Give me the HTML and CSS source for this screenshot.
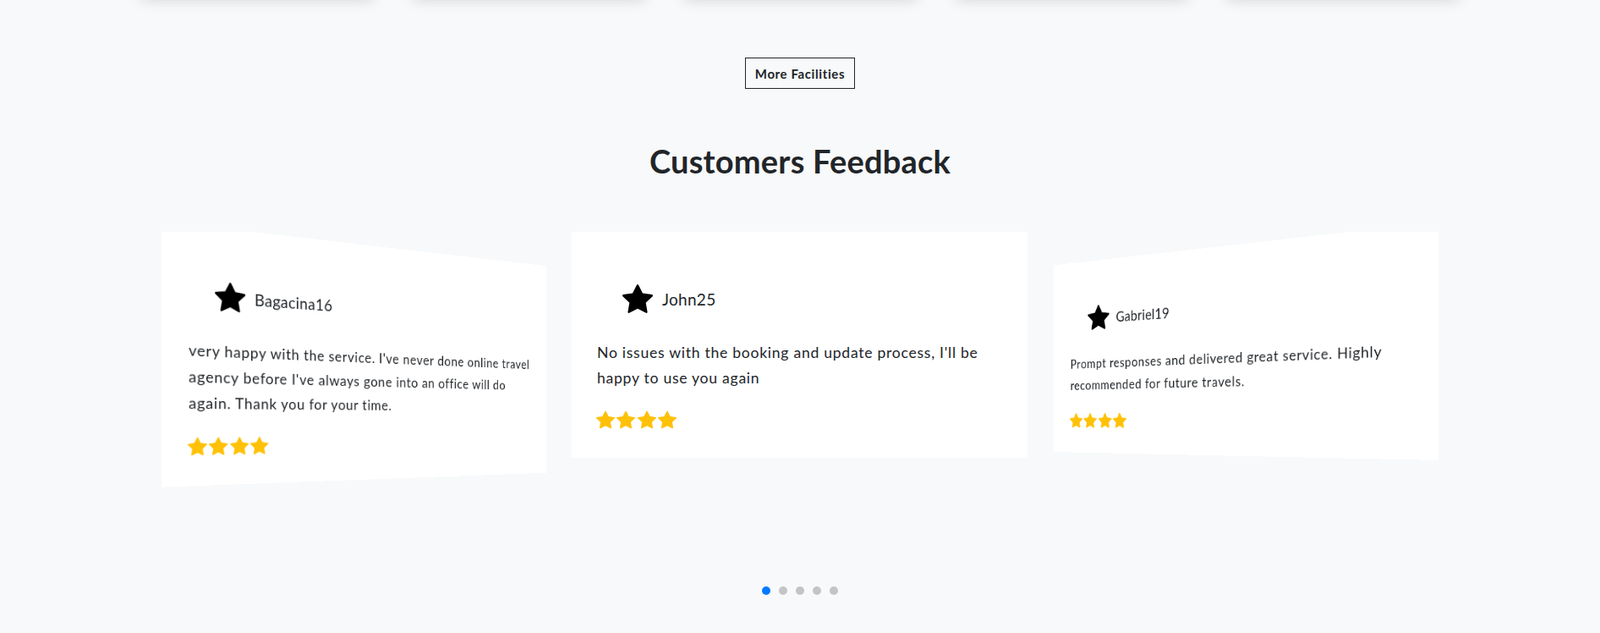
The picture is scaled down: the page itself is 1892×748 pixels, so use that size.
FILE: index.html
```html
<!DOCTYPE html>
<html lang="en">
<head>
<meta charset="utf-8">
<title>Customers Feedback</title>
<link rel="stylesheet" href="styles.css">
</head>
<body>
<div class="page">
  <section class="facilities">
    <div class="facility-card"></div>
    <div class="facility-card"></div>
    <div class="facility-card"></div>
    <div class="facility-card"></div>
    <div class="facility-card"></div>
  </section>

  <div class="more-wrap">
    <button class="more-btn" type="button">More Facilities</button>
  </div>

  <h2 class="feedback-title">Customers Feedback</h2>

  <div class="carousel">
    <div class="slide">
      <div class="review review-left">
        <div class="review-head">
          <svg class="avatar-star" viewBox="0 0 16 16" aria-hidden="true"><path d="M3.612 15.443c-.386.198-.824-.149-.746-.592l.83-4.73L.173 6.765c-.329-.314-.158-.888.283-.95l4.898-.696L7.538.792c.197-.39.73-.39.927 0l2.184 4.327 4.898.696c.441.062.612.636.282.95l-3.522 3.356.83 4.73c.078.443-.36.79-.746.592L8 13.187l-4.389 2.256z"/></svg>
          <span class="review-name">Bagacina16</span>
        </div>
        <p class="review-text">very happy with the service. I've never done online travel agency before I've always gone into an office will do again. Thank you for your time.</p>
        <div class="rating">
          <svg viewBox="0 0 16 16"><path d="M3.612 15.443c-.386.198-.824-.149-.746-.592l.83-4.73L.173 6.765c-.329-.314-.158-.888.283-.95l4.898-.696L7.538.792c.197-.39.73-.39.927 0l2.184 4.327 4.898.696c.441.062.612.636.282.95l-3.522 3.356.83 4.73c.078.443-.36.79-.746.592L8 13.187l-4.389 2.256z"/></svg>
          <svg viewBox="0 0 16 16"><path d="M3.612 15.443c-.386.198-.824-.149-.746-.592l.83-4.73L.173 6.765c-.329-.314-.158-.888.283-.95l4.898-.696L7.538.792c.197-.39.73-.39.927 0l2.184 4.327 4.898.696c.441.062.612.636.282.95l-3.522 3.356.83 4.73c.078.443-.36.79-.746.592L8 13.187l-4.389 2.256z"/></svg>
          <svg viewBox="0 0 16 16"><path d="M3.612 15.443c-.386.198-.824-.149-.746-.592l.83-4.73L.173 6.765c-.329-.314-.158-.888.283-.95l4.898-.696L7.538.792c.197-.39.73-.39.927 0l2.184 4.327 4.898.696c.441.062.612.636.282.95l-3.522 3.356.83 4.73c.078.443-.36.79-.746.592L8 13.187l-4.389 2.256z"/></svg>
          <svg viewBox="0 0 16 16"><path d="M3.612 15.443c-.386.198-.824-.149-.746-.592l.83-4.73L.173 6.765c-.329-.314-.158-.888.283-.95l4.898-.696L7.538.792c.197-.39.73-.39.927 0l2.184 4.327 4.898.696c.441.062.612.636.282.95l-3.522 3.356.83 4.73c.078.443-.36.79-.746.592L8 13.187l-4.389 2.256z"/></svg>
        </div>
      </div>
    </div>

    <div class="slide">
      <div class="review">
        <div class="review-head">
          <svg class="avatar-star" viewBox="0 0 16 16" aria-hidden="true"><path d="M3.612 15.443c-.386.198-.824-.149-.746-.592l.83-4.73L.173 6.765c-.329-.314-.158-.888.283-.95l4.898-.696L7.538.792c.197-.39.73-.39.927 0l2.184 4.327 4.898.696c.441.062.612.636.282.95l-3.522 3.356.83 4.73c.078.443-.36.79-.746.592L8 13.187l-4.389 2.256z"/></svg>
          <span class="review-name">John25</span>
        </div>
        <p class="review-text">No issues with the booking and update process, I'll be happy to use you again</p>
        <div class="rating">
          <svg viewBox="0 0 16 16"><path d="M3.612 15.443c-.386.198-.824-.149-.746-.592l.83-4.73L.173 6.765c-.329-.314-.158-.888.283-.95l4.898-.696L7.538.792c.197-.39.73-.39.927 0l2.184 4.327 4.898.696c.441.062.612.636.282.95l-3.522 3.356.83 4.73c.078.443-.36.79-.746.592L8 13.187l-4.389 2.256z"/></svg>
          <svg viewBox="0 0 16 16"><path d="M3.612 15.443c-.386.198-.824-.149-.746-.592l.83-4.73L.173 6.765c-.329-.314-.158-.888.283-.95l4.898-.696L7.538.792c.197-.39.73-.39.927 0l2.184 4.327 4.898.696c.441.062.612.636.282.95l-3.522 3.356.83 4.73c.078.443-.36.79-.746.592L8 13.187l-4.389 2.256z"/></svg>
          <svg viewBox="0 0 16 16"><path d="M3.612 15.443c-.386.198-.824-.149-.746-.592l.83-4.73L.173 6.765c-.329-.314-.158-.888.283-.95l4.898-.696L7.538.792c.197-.39.73-.39.927 0l2.184 4.327 4.898.696c.441.062.612.636.282.95l-3.522 3.356.83 4.73c.078.443-.36.79-.746.592L8 13.187l-4.389 2.256z"/></svg>
          <svg viewBox="0 0 16 16"><path d="M3.612 15.443c-.386.198-.824-.149-.746-.592l.83-4.73L.173 6.765c-.329-.314-.158-.888.283-.95l4.898-.696L7.538.792c.197-.39.73-.39.927 0l2.184 4.327 4.898.696c.441.062.612.636.282.95l-3.522 3.356.83 4.73c.078.443-.36.79-.746.592L8 13.187l-4.389 2.256z"/></svg>
        </div>
      </div>
    </div>

    <div class="slide">
      <div class="review review-right">
        <div class="review-head">
          <svg class="avatar-star" viewBox="0 0 16 16" aria-hidden="true"><path d="M3.612 15.443c-.386.198-.824-.149-.746-.592l.83-4.73L.173 6.765c-.329-.314-.158-.888.283-.95l4.898-.696L7.538.792c.197-.39.73-.39.927 0l2.184 4.327 4.898.696c.441.062.612.636.282.95l-3.522 3.356.83 4.73c.078.443-.36.79-.746.592L8 13.187l-4.389 2.256z"/></svg>
          <span class="review-name">Gabriel19</span>
        </div>
        <p class="review-text">Prompt responses and delivered great service. Highly recommended for future travels.</p>
        <div class="rating">
          <svg viewBox="0 0 16 16"><path d="M3.612 15.443c-.386.198-.824-.149-.746-.592l.83-4.73L.173 6.765c-.329-.314-.158-.888.283-.95l4.898-.696L7.538.792c.197-.39.73-.39.927 0l2.184 4.327 4.898.696c.441.062.612.636.282.95l-3.522 3.356.83 4.73c.078.443-.36.79-.746.592L8 13.187l-4.389 2.256z"/></svg>
          <svg viewBox="0 0 16 16"><path d="M3.612 15.443c-.386.198-.824-.149-.746-.592l.83-4.73L.173 6.765c-.329-.314-.158-.888.283-.95l4.898-.696L7.538.792c.197-.39.73-.39.927 0l2.184 4.327 4.898.696c.441.062.612.636.282.95l-3.522 3.356.83 4.73c.078.443-.36.79-.746.592L8 13.187l-4.389 2.256z"/></svg>
          <svg viewBox="0 0 16 16"><path d="M3.612 15.443c-.386.198-.824-.149-.746-.592l.83-4.73L.173 6.765c-.329-.314-.158-.888.283-.95l4.898-.696L7.538.792c.197-.39.73-.39.927 0l2.184 4.327 4.898.696c.441.062.612.636.282.95l-3.522 3.356.83 4.73c.078.443-.36.79-.746.592L8 13.187l-4.389 2.256z"/></svg>
          <svg viewBox="0 0 16 16"><path d="M3.612 15.443c-.386.198-.824-.149-.746-.592l.83-4.73L.173 6.765c-.329-.314-.158-.888.283-.95l4.898-.696L7.538.792c.197-.39.73-.39.927 0l2.184 4.327 4.898.696c.441.062.612.636.282.95l-3.522 3.356.83 4.73c.078.443-.36.79-.746.592L8 13.187l-4.389 2.256z"/></svg>
        </div>
      </div>
    </div>
  </div>

  <div class="dots">
    <span class="dot dot-active"></span>
    <span class="dot"></span>
    <span class="dot"></span>
    <span class="dot"></span>
    <span class="dot"></span>
  </div>
</div>
</body>
</html>
```

FILE: styles.css
```css
html, body {
  margin: 0;
  padding: 0;
  background: #f8f9fa;
}

body {
  font-family: "Lato", "Liberation Sans", sans-serif;
  color: #212529;
  overflow: hidden;
}

.page {
  display: flow-root;
  min-height: 748px;
}

/* facilities row whose cards sit just above the viewport */
.facilities {
  display: flex;
  justify-content: center;
  gap: 46px;
  margin-top: -108px;
}

.facility-card {
  width: 275px;
  height: 100px;
  background: #fff;
  box-shadow: 0 8px 16px rgba(0, 0, 0, 0.15);
}

.more-wrap {
  display: flex;
  justify-content: center;
  margin-top: 76px;
}

.more-btn {
  height: 37px;
  padding: 0 11px;
  border: 1px solid #212529;
  border-radius: 0;
  background: transparent;
  color: #212529;
  font-family: "Lato", "Liberation Sans", sans-serif;
  font-weight: 700;
  font-size: 15px;
  letter-spacing: 0.6px;
  cursor: pointer;
}

.feedback-title {
  margin: 63px 0 0;
  text-align: center;
  font-size: 38px;
  line-height: 45px;
  font-weight: 700;
  letter-spacing: 0.2px;
  color: #212529;
}

/* carousel */
.carousel {
  width: 1510px;
  height: 330px;
  margin: 61px auto 0;
  overflow: hidden;
  display: grid;
  grid-template-columns: 485px 539px 486px;
  align-items: start;
}

.slide {
  width: 0;
  min-width: 100%;
}

.review {
  box-sizing: border-box;
  width: 539px;
  padding: 61px 24px 34px 30px;
  background: #fff;
}

.review-left {
  transform-origin: 0 0;
  transform: matrix3d(1.08562, 0.119091, 0, 0.00052911, 0, 1.05758, 0, 0, 0, 0, 1, 0, 0, -12.4, 0, 1);
}

.review-right {
  transform-origin: 0 0;
  transform: matrix3d(0.648071, -0.090692, 0, -0.00040461, 0, 0.825843, 0, 0, 0, 0, 1, 0, 30.7, 39.5, 0, 1);
}

.review-head {
  display: flex;
  align-items: center;
  gap: 11px;
  height: 36px;
  padding-left: 30px;
}

.avatar-star {
  width: 36px;
  height: 36px;
  fill: #000;
  flex: none;
}

.review-name {
  font-size: 19px;
  letter-spacing: 0.3px;
  color: #212529;
}

.review-text {
  margin: 30.5px 0 0;
  font-size: 17.6px;
  line-height: 30px;
  letter-spacing: 0.72px;
  color: #212529;
}

.rating {
  display: flex;
  gap: 2.4px;
  margin-top: 23.5px;
  margin-left: -1px;
  height: 22px;
}

.rating svg {
  width: 22px;
  height: 22px;
  fill: #ffc107;
}

/* pagination dots */
.dots {
  display: flex;
  justify-content: center;
  gap: 10px;
  margin-top: 89px;
}

.dot {
  width: 10px;
  height: 10px;
  border-radius: 50%;
  background: #c4c4c4;
}

.dot-active {
  background: #007aff;
}
```
